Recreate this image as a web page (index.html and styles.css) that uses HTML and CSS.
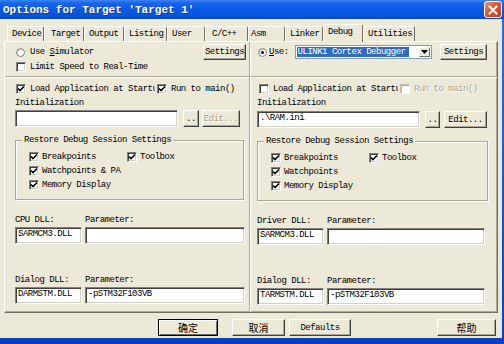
FILE: index.html
```html
<!DOCTYPE html>
<html lang="zh">
<head>
  <meta charset="UTF-8">
  <title>Options for Target 'Target 1'</title>
  <link rel="stylesheet" href="styles.css">
</head>
<body>
  <div class="window">
    <div class="titlebar">
      <span class="title">Options for Target 'Target 1'</span>
      <span class="close">
        <svg width="10" height="10" viewBox="0 0 10 10"><path d="M1.5 1.5 L8.5 8.5 M8.5 1.5 L1.5 8.5" stroke="#fff" stroke-width="2" stroke-linecap="square"/></svg>
      </span>
    </div>

    <div class="client">
      <div class="tabs">
        <div class="tab t-device">Device</div>
        <div class="tab t-target">Target</div>
        <div class="tab t-output">Output</div>
        <div class="tab t-listing">Listing</div>
        <div class="tab t-user">User</div>
        <div class="tab t-cpp">C/C++</div>
        <div class="tab t-asm">Asm</div>
        <div class="tab t-linker">Linker</div>
        <div class="tab t-debug active">Debug</div>
        <div class="tab t-util">Utilities</div>
      </div>

      <div class="panel">
        <!-- simulateur -->
        <div class="pane pane-left">
          <div class="row row-top">
            <span class="radio"></span>
            <span class="lbl radio-lbl">Use <u>S</u>imulator</span>
            <span class="btn settings">Settings</span>
          </div>
          <div class="row">
            <span class="check"></span>
            <span class="lbl">Limit Speed to Real-Time</span>
          </div>
          <div class="sep"></div>
          <div class="row">
            <span class="check on"><svg width="8" height="8" viewBox="0 0 8 8"><path d="M1 3.5 L3 5.5 L7 1.5" fill="none" stroke="#000" stroke-width="1.6"/></svg></span>
            <span class="lbl clip">Load Application at Startup</span>
            <span class="check on run"><svg width="8" height="8" viewBox="0 0 8 8"><path d="M1 3.5 L3 5.5 L7 1.5" fill="none" stroke="#000" stroke-width="1.6"/></svg></span>
            <span class="lbl">Run to main()</span>
          </div>
          <div class="row"><span class="lbl">Initialization</span></div>
          <div class="field-row">
            <div class="field init"></div>
            <span class="btn dots">..</span>
            <span class="btn edit disabled">Edit...</span>
          </div>
          <fieldset class="group">
            <legend>Restore Debug Session Settings</legend>
            <div class="row">
              <span class="check on"><svg width="8" height="8" viewBox="0 0 8 8"><path d="M1 3.5 L3 5.5 L7 1.5" fill="none" stroke="#000" stroke-width="1.6"/></svg></span>
              <span class="lbl first">Breakpoints</span>
              <span class="check on"><svg width="8" height="8" viewBox="0 0 8 8"><path d="M1 3.5 L3 5.5 L7 1.5" fill="none" stroke="#000" stroke-width="1.6"/></svg></span>
              <span class="lbl">Toolbox</span>
            </div>
            <div class="row">
              <span class="check on"><svg width="8" height="8" viewBox="0 0 8 8"><path d="M1 3.5 L3 5.5 L7 1.5" fill="none" stroke="#000" stroke-width="1.6"/></svg></span>
              <span class="lbl">Watchpoints &amp; PA</span>
            </div>
            <div class="row">
              <span class="check on"><svg width="8" height="8" viewBox="0 0 8 8"><path d="M1 3.5 L3 5.5 L7 1.5" fill="none" stroke="#000" stroke-width="1.6"/></svg></span>
              <span class="lbl">Memory Display</span>
            </div>
          </fieldset>
          <div class="row dll-head">
            <span class="lbl dll-col">CPU DLL:</span>
            <span class="lbl">Parameter:</span>
          </div>
          <div class="field-row">
            <div class="field dll">SARMCM3.DLL</div>
            <div class="field param"></div>
          </div>
          <div class="row dll-head second">
            <span class="lbl dll-col">Dialog DLL:</span>
            <span class="lbl">Parameter:</span>
          </div>
          <div class="field-row">
            <div class="field dll">DARMSTM.DLL</div>
            <div class="field param">-pSTM32F103VB</div>
          </div>
        </div>

        <div class="vdiv"></div>

        <!-- cible materielle -->
        <div class="pane pane-right">
          <div class="row row-top">
            <span class="radio on"></span>
            <span class="lbl radio-lbl"><u>U</u>se:</span>
            <div class="combo">
              <span class="combo-sel">ULINK1 Cortex Debugger</span>
              <span class="combo-arrow"><svg width="7" height="4" viewBox="0 0 7 4"><path d="M0 0 H7 L3.5 4 Z" fill="#000"/></svg></span>
            </div>
            <span class="btn settings">Settings</span>
          </div>
          <div class="sep first-sep"></div>
          <div class="row">
            <span class="check"></span>
            <span class="lbl clip">Load Application at Startup</span>
            <span class="check run disabled"></span>
            <span class="lbl disabled">Run to main()</span>
          </div>
          <div class="row"><span class="lbl">Initialization</span></div>
          <div class="field-row">
            <div class="field init">.\RAM.ini</div>
            <span class="btn dots">..</span>
            <span class="btn edit">Edit...</span>
          </div>
          <fieldset class="group">
            <legend>Restore Debug Session Settings</legend>
            <div class="row">
              <span class="check on"><svg width="8" height="8" viewBox="0 0 8 8"><path d="M1 3.5 L3 5.5 L7 1.5" fill="none" stroke="#000" stroke-width="1.6"/></svg></span>
              <span class="lbl first">Breakpoints</span>
              <span class="check on"><svg width="8" height="8" viewBox="0 0 8 8"><path d="M1 3.5 L3 5.5 L7 1.5" fill="none" stroke="#000" stroke-width="1.6"/></svg></span>
              <span class="lbl">Toolbox</span>
            </div>
            <div class="row">
              <span class="check on"><svg width="8" height="8" viewBox="0 0 8 8"><path d="M1 3.5 L3 5.5 L7 1.5" fill="none" stroke="#000" stroke-width="1.6"/></svg></span>
              <span class="lbl">Watchpoints</span>
            </div>
            <div class="row">
              <span class="check on"><svg width="8" height="8" viewBox="0 0 8 8"><path d="M1 3.5 L3 5.5 L7 1.5" fill="none" stroke="#000" stroke-width="1.6"/></svg></span>
              <span class="lbl">Memory Display</span>
            </div>
          </fieldset>
          <div class="row dll-head">
            <span class="lbl dll-col">Driver DLL:</span>
            <span class="lbl">Parameter:</span>
          </div>
          <div class="field-row">
            <div class="field dll">SARMCM3.DLL</div>
            <div class="field param"></div>
          </div>
          <div class="row dll-head second">
            <span class="lbl dll-col">Dialog DLL:</span>
            <span class="lbl">Parameter:</span>
          </div>
          <div class="field-row">
            <div class="field dll">TARMSTM.DLL</div>
            <div class="field param">-pSTM32F103VB</div>
          </div>
        </div>
      </div>

      <div class="buttons">
        <span class="btn cn default ok">确定</span>
        <span class="btn cn cancel">取消</span>
        <span class="btn defaults">Defaults</span>
        <span class="btn cn help">帮助</span>
      </div>
    </div>
  </div>
</body>
</html>
```

FILE: styles.css
```css
* {
  box-sizing: border-box;
}
body {
  margin: 0;
  background: #fff;
  font-family: "Liberation Mono", monospace;
  font-size: 9px;
  letter-spacing: -0.5px;
  color: #000;
}
.window {
  width: 504px;
  height: 344px;
  display: flex;
  flex-direction: column;
  background: linear-gradient(#2f6fe0, #0a3fc4);
}
.titlebar {
  height: 19px;
  display: flex;
  align-items: center;
  padding: 0 2px 0 3px;
  background: linear-gradient(#3b84f2, #1763ea 18%, #0a58e4 55%, #0852d9 85%, #0a47c6);
}
.title {
  flex: 1;
  color: #fff;
  font-size: 11px;
  font-weight: bold;
  letter-spacing: 0;
  text-shadow: 1px 1px #1a3a9a;
}
.close {
  width: 18px;
  height: 17px;
  display: flex;
  align-items: center;
  justify-content: center;
  border: 1px solid #fff;
  border-radius: 3px;
  background: linear-gradient(135deg, #f0916b, #dc5630 45%, #c23c16);
}
.client {
  flex: 1;
  margin: 0 2px 6px 0;
  padding-left: 4px;
  background: #ece9d8;
  display: flex;
  flex-direction: column;
}

/* onglets */
.tabs {
  display: flex;
  align-items: flex-end;
  height: 15px;
  margin: 7px 0 0 3px;
}
.tab {
  height: 15px;
  padding-left: 4px;
  line-height: 14px;
  border-top: 1px solid #fff;
  border-left: 1px solid #fff;
  border-right: 1px solid #716f64;
  border-radius: 2px 2px 0 0;
}
.tab.active {
  position: relative;
  z-index: 1;
  height: 18px;
  margin-bottom: -1px;
  line-height: 15px;
  background: #ece9d8;
}
.t-device { width: 37px; }
.t-target { width: 40px; padding-left: 6px; }
.t-output { width: 40px; }
.t-listing { width: 43px; }
.t-user { width: 38px; }
.t-cpp { width: 43px; padding-left: 6px; }
.t-asm { width: 37px; padding-left: 2px; }
.t-linker { width: 38px; }
.t-debug { width: 40px; }
.t-util { width: 52px; }

.panel {
  width: 494px;
  height: 272px;
  display: flex;
  border: 1px solid;
  border-color: #fff #716f64 #716f64 #fff;
  box-shadow: inset -1px -1px #aca899;
}
.pane {
  display: flex;
  flex-direction: column;
}
.pane-left {
  width: 244px;
  padding: 0 3px 0 10px;
}
.pane-right {
  width: 246px;
  padding: 0 10px 0 6px;
}
.vdiv {
  width: 2px;
  border-left: 1px solid #aca899;
  border-right: 1px solid #fff;
}

.row {
  display: flex;
  align-items: center;
  height: 14px;
  flex-shrink: 0;
}
.row-top {
  height: 16px;
  margin-top: 2px;
}
.lbl {
  white-space: nowrap;
}
.lbl.disabled {
  color: #aca899;
  text-shadow: 1px 1px #fff;
}
.sep {
  height: 2px;
  margin: 2px -3px 4px -10px;
  border-top: 1px solid #aca899;
  border-bottom: 1px solid #fff;
  flex-shrink: 0;
}
.pane-right .sep {
  margin: 16px -10px 4px -6px;
}

/* cases et boutons radio */
.radio {
  width: 9px;
  height: 9px;
  margin-left: 1px;
  border-radius: 50%;
  background: #fff;
  border: 1px solid #8a887c;
  box-shadow: inset 1px 1px #c9c6b6;
  display: flex;
  align-items: center;
  justify-content: center;
}
.radio.on::after {
  content: "";
  width: 3px;
  height: 3px;
  border-radius: 50%;
  background: #000;
}
.radio-lbl {
  margin-left: 5px;
}
.pane-right .radio-lbl {
  margin-left: 2px;
}
.check {
  width: 10px;
  height: 10px;
  margin-left: 1px;
  flex-shrink: 0;
  background: #fff;
  border: 1px solid;
  border-color: #808080 #fff #fff #808080;
  box-shadow: inset 1px 1px #404040, inset -1px -1px #d4d0c8;
  display: flex;
  align-items: center;
  justify-content: center;
}
.check + .lbl {
  margin-left: 4px;
}
.pane-right > .row > .check:first-child {
  margin-left: 2px;
}
.check.disabled {
  border-color: #c9c6b6 #fff #fff #c9c6b6;
  box-shadow: inset 1px 1px #aca899;
}
.lbl.clip {
  width: 125px;
  overflow: hidden;
}
.check.run {
  margin-left: 2px;
}
.group .check {
  margin-left: 0;
}
.group .check + .lbl {
  margin-left: 3px;
}
.group .lbl.first {
  width: 85px;
}

/* boutons */
.btn {
  display: flex;
  align-items: center;
  justify-content: center;
  white-space: nowrap;
  background: #ece9d8;
  border: 1px solid;
  border-color: #fff #404040 #404040 #fff;
  box-shadow: inset -1px -1px #aca899;
}
.btn.disabled {
  color: #aca899;
  text-shadow: 1px 1px #fff;
}
.settings {
  height: 16px;
  width: 43px;
  margin-left: auto;
}
.pane-right .settings {
  width: 47px;
}
.combo {
  width: 137px;
  height: 14px;
  margin-left: 6px;
  padding: 1px;
  display: flex;
  background: #fff;
  border: 1px solid #7f9db9;
}
.combo-sel {
  width: 112px;
  padding-left: 1px;
  line-height: 10px;
  background: #316ac5;
  color: #fff;
  white-space: nowrap;
  overflow: hidden;
}
.combo-arrow {
  width: 11px;
  margin-left: auto;
  display: flex;
  align-items: center;
  justify-content: center;
  background: #ece9d8;
  border: 1px solid;
  border-color: #fff #716f64 #716f64 #fff;
}

/* champs */
.field-row {
  display: flex;
  height: 17px;
  flex-shrink: 0;
}
.pane .field-row:nth-of-type(5) {
  margin-top: 1px;
}
.field {
  height: 17px;
  padding: 0 2px;
  line-height: 13px;
  white-space: nowrap;
  overflow: hidden;
  background: #fff;
  border: 1px solid;
  border-color: #808080 #fff #fff #808080;
  box-shadow: inset 1px 1px #404040, inset -1px -1px #d4d0c8;
}
.field.init {
  width: 163px;
}
.dots {
  width: 16px;
  margin-left: 5px;
}
.edit {
  width: 38px;
  margin-left: 3px;
}
.pane-right .dots {
  width: 15px;
}
.pane-right .edit {
  width: 43px;
  margin-left: 4px;
}
.field.dll {
  width: 67px;
}
.field.param {
  width: 160px;
  margin-left: 3px;
}
.pane-right .field.param {
  width: 158px;
}

/* groupe */
.group {
  width: 229px;
  margin: 7px 0 0 0;
  padding: 4px 0 7px 13px;
  border: 1px solid #aca899;
  box-shadow: 1px 1px #fff, inset 1px 1px #fff;
  flex-shrink: 0;
}
.pane-right .group {
  width: 231px;
}
.group legend {
  margin-left: -7px;
  padding: 0 2px;
  height: 12px;
  line-height: 12px;
  background: #ece9d8;
}
.dll-head {
  margin-top: 13px;
}
.dll-head.second {
  margin-top: 29px;
}
.dll-col {
  width: 70px;
}

/* boutons du bas */
.buttons {
  display: flex;
  height: 17px;
  margin-top: 6px;
}
.buttons .btn {
  height: 17px;
}
.cn {
  font-family: "Noto Sans CJK SC", sans-serif;
  font-size: 10px;
  letter-spacing: 0;
}
.ok {
  width: 60px;
  margin-left: 154px;
}
.btn.default {
  border-color: #000;
  box-shadow: inset 1px 1px #fff, inset -1px -1px #716f64;
}
.cancel {
  width: 53px;
  margin-left: 14px;
}
.defaults {
  width: 62px;
  margin-left: 4px;
}
.help {
  width: 59px;
  margin-left: 86px;
}
```
